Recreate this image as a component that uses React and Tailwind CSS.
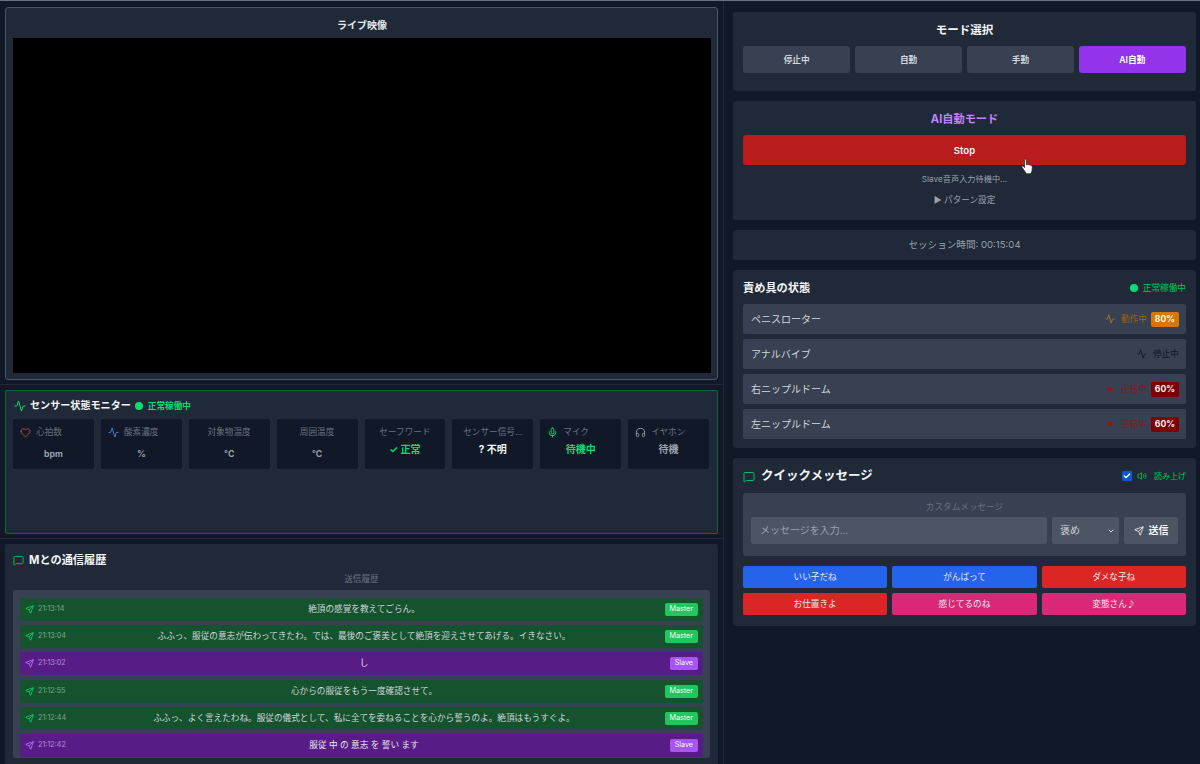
import React from "react";
import { Activity, Heart, Mic, Headphones, MessageSquare, Send, Volume2, Check, ChevronDown } from "lucide-react";

const sensors = [
  { label: "心拍数", icon: <Heart size={11} className="text-red-400 opacity-70" />, value: "bpm", cls: "mt-[9px] text-gray-400 text-[8.64px]" },
  { label: "酸素濃度", icon: <Activity size={11} className="text-blue-400 opacity-80" />, value: "%", cls: "mt-[9px] text-gray-400 text-[8.64px]" },
  { label: "対象物温度", value: "°C", cls: "mt-[9px] text-gray-400 text-[8.64px]" },
  { label: "周囲温度", value: "°C", cls: "mt-[9px] text-gray-400 text-[8.64px]" },
  { label: "セーフワード", value: "✓ 正常", cls: "mt-[4px] text-green-400 text-[10px]" },
  { label: "センサー信号...", value: "? 不明", cls: "mt-[4px] text-gray-100 text-[10px]" },
  { label: "マイク", icon: <Mic size={11} className="text-green-400" />, value: "待機中", cls: "mt-[4px] text-green-400 text-[10px]" },
  { label: "イヤホン", icon: <Headphones size={11} className="text-gray-400" />, value: "待機", cls: "mt-[4px] text-gray-400 text-[10px]" },
];

const history = [
  ["21:13:14", "絶頂の感覚を教えてごらん。", "Master"],
  ["21:13:04", "ふふっ、服従の意志が伝わってきたわ。では、最後のご褒美として絶頂を迎えさせてあげる。イきなさい。", "Master"],
  ["21:13:02", "し", "Slave"],
  ["21:12:55", "心からの服従をもう一度確認させて。", "Master"],
  ["21:12:44", "ふふっ、よく言えたわね。服従の儀式として、私に全てを委ねることを心から誓うのよ。絶頂はもうすぐよ。", "Master"],
  ["21:12:42", "服従 中 の 意志 を 誓い ます", "Slave"],
];

function Panel({ className = "", children }) {
  return <section className={"rounded-[3px] bg-[#1f2937] " + className}>{children}</section>;
}

function HistoryRow({ time, text, who }) {
  const master = who === "Master";
  return (
    <div className={"flex h-[23px] items-center pl-[5px] pr-[5px] " + (master ? "bg-[#14532d]" : "bg-[#581c87]")}>
      <div className="flex w-[125px] shrink-0 items-center gap-[4px]">
        <Send size={9} className={master ? "text-green-400" : "text-purple-400"} />
        <span className={"text-[7.2px] " + (master ? "text-green-100/50" : "text-purple-200/60")}>{time}</span>
      </div>
      <div className={"flex-1 text-center text-[8.64px] " + (master ? "text-gray-300" : "text-gray-200")}>{text}</div>
      <div className="flex w-[120px] shrink-0 justify-end">
        <span className={"flex h-[13px] items-center rounded-[2px] px-[5px] text-[7.2px] text-green-50 " + (master ? "bg-[#22c55e]" : "bg-[#a855f7]")}>{who}</span>
      </div>
    </div>
  );
}

function DeviceRow({ name, icon, status, statusCls, badge, badgeCls }) {
  return (
    <div className="flex h-[30px] items-center justify-between rounded-[2px] bg-[#374151] pl-[8px] pr-[7px]">
      <span className="text-[10px] text-gray-300">{name}</span>
      <div className="flex items-center gap-[4px]">
        {icon}
        <span className={"text-[8.64px] " + statusCls}>{status}</span>
        {badge && <span className={"flex h-[15px] items-center rounded-[2px] px-[4px] text-[8.64px] font-bold text-gray-100 " + badgeCls}>{badge}</span>}
      </div>
    </div>
  );
}

function RedDot() {
  return <span className="mr-[4px] h-[4px] w-[6px] rounded-full bg-[#8b1a1a]" />;
}

function ModeButton({ active, children }) {
  return (
    <button className={"h-[27px] flex-1 rounded-[3px] pt-[1px] text-[8.64px] font-semibold " + (active ? "bg-[#9333ea] text-white" : "bg-[#374151] text-gray-300")}>
      {children}
    </button>
  );
}

function Quick({ cls, children }) {
  return <button className={"h-[22px] rounded-[2px] text-[8.64px] text-gray-200 " + cls}>{children}</button>;
}

export default function App() {
  return (
    <div className="relative flex h-[764px] w-[1200px] overflow-hidden border-t border-t-gray-500 bg-[#111827] font-['Inter','Noto_Sans_CJK_JP',sans-serif]">
      <main className="flex h-full w-[724px] shrink-0 flex-col border-r border-r-[#1f2937]">
        <div className="border-b border-b-[#1f2937] px-[5px] pb-[4px] pt-[6px]">
          <section className="flex h-[373px] flex-col rounded-[3px] border border-gray-600 bg-[#1f2937] pl-[7px] pr-[6px] pb-[6px]">
            <h2 className="flex h-[30px] shrink-0 items-center justify-center pt-[4px] text-[10px] font-bold text-gray-200">ライブ映像</h2>
            <div className="flex-1 bg-black" />
          </section>
        </div>
        <div className="border-b border-b-[#1f2937] px-[5px] pb-[4px] pt-[5px]">
          <section className="h-[144px] rounded-[2px] border border-[#166534] bg-[#1f2937] pl-[7px] pr-[8px]">
            <div className="flex h-[28px] items-center gap-[4px] pl-[1px] pt-[2px]">
              <Activity size={12} className="text-green-400" />
              <h2 className="text-[10.08px] font-bold text-gray-100">センサー状態モニター</h2>
              <span className="h-[8px] w-[8px] rounded-full bg-green-400" />
              <span className="ml-[1px] text-[8.64px] font-semibold text-green-400">正常稼働中</span>
            </div>
            <div className="grid grid-cols-8 gap-[7px]">
              {sensors.map((s) => (
                <div key={s.label} className="h-[50px] rounded-[2px] bg-[#111827] px-[7px] pt-[7px]">
                  <div className={"flex h-[12px] items-center gap-[5px] text-[8.64px] text-gray-500 " + (s.icon ? "" : "justify-center")}>
                    {s.icon}
                    <span className="whitespace-nowrap">{s.label}</span>
                  </div>
                  <div className={"flex h-[14px] items-center justify-center font-bold " + s.cls}>{s.value}</div>
                </div>
              ))}
            </div>
          </section>
        </div>
        <div className="flex-1 px-[5px] pt-[5px]">
          <section className="h-[222px] rounded-[2px] bg-[#1f2937] px-[8px]">
            <div className="flex h-[27px] items-center gap-[5px] pt-[6px]">
              <MessageSquare size={11} className="text-green-400 opacity-80" />
              <h2 className="text-[11.2px] font-bold text-gray-100">Mとの通信履歴</h2>
            </div>
            <p className="h-[19px] pt-[2px] text-center text-[8.64px] text-gray-500">送信履歴</p>
            <div className="flex h-[168px] flex-col gap-[4.2px] rounded-[2px] bg-[#374151] px-[7px] pb-[1px] pt-[8px]">
              {history.map(([t, x, w]) => (
                <HistoryRow key={t} time={t} text={x} who={w} />
              ))}
            </div>
          </section>
        </div>
      </main>

      <aside className="flex min-w-0 flex-1 flex-col gap-[10px] pl-[9px] pr-[4px] pt-[11px]">
        <Panel className="h-[79px] px-[10px]">
          <h2 className="flex h-[34px] items-center justify-center pt-[4px] text-[11.52px] font-bold text-gray-100">モード選択</h2>
          <div className="flex gap-[4.5px]">
            <ModeButton>停止中</ModeButton>
            <ModeButton>自動</ModeButton>
            <ModeButton>手動</ModeButton>
            <ModeButton active>AI自動</ModeButton>
          </div>
        </Panel>

        <Panel className="h-[119px] px-[10px]">
          <h2 className="flex h-[34px] items-center justify-center pt-[2px] text-[11.2px] font-bold text-[#c084fc]">AI自動モード</h2>
          <button className="h-[30px] w-full rounded-[3px] bg-[#b91c1c] pt-[3px] text-[9.6px] font-semibold text-gray-100">Stop</button>
          <p className="mt-[8px] text-center text-[8.2px] text-gray-400">Slave音声入力待機中...</p>
          <p className="mt-[9px] text-center text-[8.64px] text-gray-400">▶ パターン設定</p>
        </Panel>

        <Panel className="flex h-[30px] items-center justify-center pt-[1px]">
          <span className="text-[9.6px] text-gray-400">セッション時間: 00:15:04</span>
        </Panel>

        <Panel className="h-[178px] px-[10px]">
          <div className="flex h-[34px] items-center justify-between pt-[3px]">
            <h2 className="text-[11.2px] font-bold text-gray-100">責め具の状態</h2>
            <div className="flex items-center gap-[5px]">
              <span className="h-[8px] w-[8px] rounded-full bg-green-400" />
              <span className="text-[8.64px] text-green-500">正常稼働中</span>
            </div>
          </div>
          <div className="flex flex-col gap-[5px]">
            <DeviceRow name="ペニスローター" icon={<Activity size={10} className="mr-[2px] text-[#b7791f]" />} status="動作中" statusCls="text-[#a16207]" badge="80%" badgeCls="bg-[#d97706]" />
            <DeviceRow name="アナルバイブ" icon={<Activity size={10} className="mr-[2px] text-[#111827]" />} status="停止中" statusCls="text-[#111827]" />
            <DeviceRow name="右ニップルドーム" icon={<RedDot />} status="逆転中" statusCls="text-[#7f1d1d]" badge="60%" badgeCls="bg-[#7f0000]" />
            <DeviceRow name="左ニップルドーム" icon={<RedDot />} status="逆転中" statusCls="text-[#7f1d1d]" badge="60%" badgeCls="bg-[#7f0000]" />
          </div>
        </Panel>

        <Panel className="h-[168px] px-[10px]">
          <div className="flex h-[35px] items-center justify-between">
            <div className="flex items-center gap-[6px] pt-[2px]">
              <MessageSquare size={12} className="text-green-400 opacity-80" />
              <h2 className="text-[12.5px] font-bold text-gray-100">クイックメッセージ</h2>
            </div>
            <div className="flex items-center gap-[5px]">
              <span className="flex h-[10px] w-[10px] items-center justify-center rounded-[1px] bg-[#0b57d0]">
                <Check size={8} strokeWidth={4} className="text-white" />
              </span>
              <Volume2 size={10} className="text-green-500" />
              <span className="ml-[2px] text-[8px] text-green-500">読み上げ</span>
            </div>
          </div>
          <div className="h-[63px] rounded-[3px] bg-[#374151] px-[8px]">
            <p className="flex h-[24px] items-center justify-center pt-[4px] text-[8.64px] text-gray-500">カスタムメッセージ</p>
            <div className="flex h-[27px] gap-[5px]">
              <div className="flex flex-1 items-center rounded-[2px] border border-gray-600 bg-[#4b5563] px-[8px] text-[10px] text-gray-400">メッセージを入力...</div>
              <div className="flex w-[67px] items-center justify-between rounded-[2px] bg-[#4b5563] pl-[8px] pr-[4px] text-[10px] text-gray-300">
                褒め
                <ChevronDown size={8} strokeWidth={3} />
              </div>
              <button className="flex w-[54px] items-center justify-center gap-[5px] rounded-[2px] bg-[#4b5563] text-[10px] font-bold text-gray-100">
                <Send size={10} />
                送信
              </button>
            </div>
          </div>
          <div className="mt-[10px] grid grid-cols-3 gap-x-[5px] gap-y-[5px]">
            <Quick cls="bg-[#2563eb]">いい子だね</Quick>
            <Quick cls="bg-[#2563eb]">がんばって</Quick>
            <Quick cls="bg-[#dc2626]">ダメな子ね</Quick>
            <Quick cls="bg-[#dc2626]">お仕置きよ</Quick>
            <Quick cls="bg-[#db2777]">感じてるのね</Quick>
            <Quick cls="bg-[#db2777]">変態さん♪</Quick>
          </div>
        </Panel>
      </aside>

      <svg className="absolute left-[1021px] top-[157px]" width="13" height="17" viewBox="0 0 13 17" aria-hidden="true">
        <path d="M3.500 1.500c.6-.7 1.600-.4 1.700.6l.2 4.600 1.200-.3 1.300.3 1.200.2 1.200.6c.7.4 1 1 1 1.800l-.3 3.400-1.200 3H5.500L2.600 11.600 1 9.200c-.5-.8.4-1.600 1.200-1L3.600 9.600z" fill="#fff" stroke="#222" strokeWidth=".7" />
      </svg>
    </div>
  );
}
